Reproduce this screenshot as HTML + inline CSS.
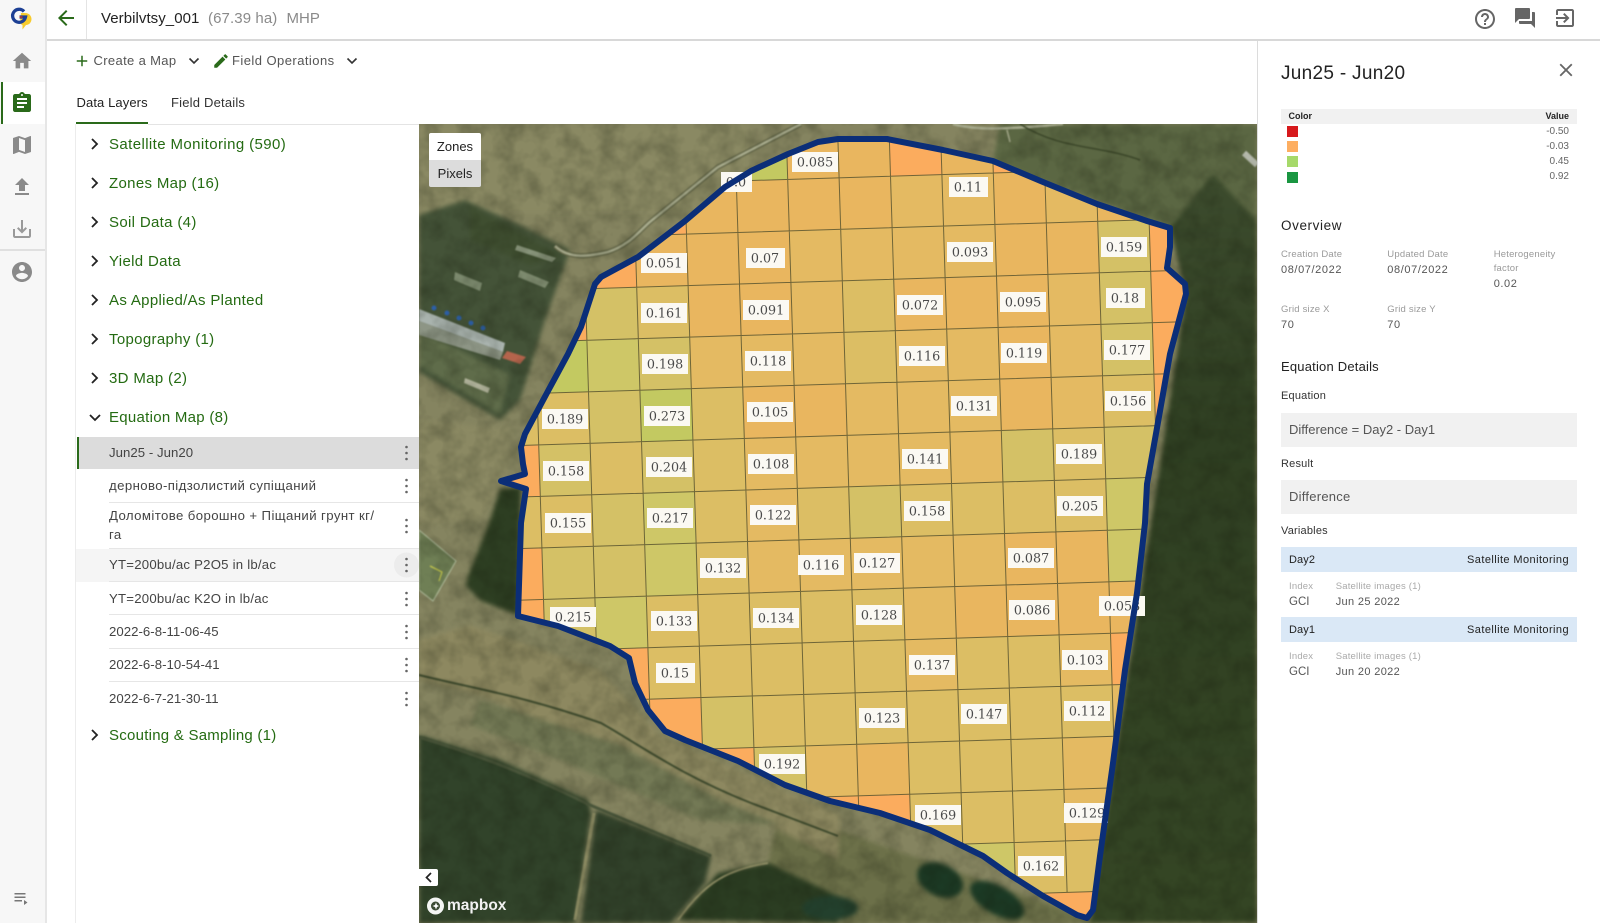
<!DOCTYPE html>
<html><head><meta charset="utf-8"><title>Verbilvtsy_001</title>
<style>
html,body{margin:0;padding:0;background:#fff;width:1600px;height:923px;overflow:hidden}
body{position:relative;font-family:"Liberation Sans","Noto Sans CJK SC",sans-serif}
.t{position:absolute;white-space:nowrap;line-height:20px;color:#444}
.b{position:absolute}
.g{font-size:15px;letter-spacing:.33px;color:#246b12;left:109px}
.s{font-size:13.2px;color:#444;left:109px;letter-spacing:.04px}
.c{letter-spacing:.4px}
.y{letter-spacing:.22px}
.sep{position:absolute;left:109px;width:310px;height:1px;background:#e6e6e6}
.lab{font-size:9.5px;color:#9a9a9a;letter-spacing:.2px}
.val{font-size:11px;color:#555;letter-spacing:.6px}
.h{font-size:13px;color:#222;letter-spacing:.2px}
.l{font-size:11px;color:#333;letter-spacing:.2px}
svg{position:absolute;display:block}
</style></head><body>

<!-- left nav -->
<div class="b" style="left:0;top:0;width:45px;height:923px;background:#f7f7f7;border-right:2px solid #e6e6e6"></div>
<div class="b" style="left:1px;top:82px;width:44px;height:42px;background:#fff"></div>
<div class="b" style="left:1px;top:82px;width:2px;height:42px;background:#2a6a1a"></div>
<div class="b" style="left:0;top:249px;width:45px;height:2px;background:#e0e0e0"></div>

<svg style="left:0;top:0" width="40" height="36" viewBox="0 0 40 36">
<path d="M21 13h4c4 0 6.500 2.800 6.500 6 0 3.500-2.500 6-5.500 6l-3.500 4.500V25c-1.500-.5-2.500-1.500-2.500-3z" fill="#f7cb2d"/>
<path d="M24 11.500A6.500 6.500 0 1 0 25.500 17H19.500" fill="none" stroke="#1c3f94" stroke-width="3.300"/>
<path d="M19.500 17h3" stroke="#c9372c" stroke-width="1.500"/>
</svg>
<svg style="left:11px;top:50px" width="22" height="22" viewBox="0 0 24 24" fill="#8a8a8a"><path d="M10 20v-6h4v6h5v-8h3L12 3 2 12h3v8z"/></svg>
<svg style="left:10px;top:91px" width="24" height="24" viewBox="0 0 24 24" fill="#2a6a1a"><path d="M19 3h-4.180C14.400 1.840 13.300 1 12 1c-1.300 0-2.400.84-2.820 2H5c-1.100 0-2 .9-2 2v14c0 1.100.9 2 2 2h14c1.100 0 2-.9 2-2V5c0-1.100-.9-2-2-2zm-7 0c.55 0 1 .45 1 1s-.45 1-1 1-1-.45-1-1 .45-1 1-1zm2 14H7v-2h7v2zm3-4H7v-2h10v2zm0-4H7V7h10v2z"/></svg>
<svg style="left:10px;top:133px" width="24" height="24" viewBox="0 0 24 24" fill="#8a8a8a"><path d="M20.500 3l-.16.03L15 5.100 9 3 3.360 4.900c-.21.07-.36.25-.36.48V20.500c0 .28.22.5.5.5l.16-.03L9 18.900l6 2.100 5.640-1.900c.21-.07.36-.25.36-.48V3.500c0-.28-.22-.5-.5-.5zM15 19l-6-2.110V5l6 2.110V19z"/></svg>
<svg style="left:10px;top:175px" width="24" height="24" viewBox="0 0 24 24" fill="#8a8a8a"><path d="M9 16h6v-6h4l-7-7-7 7h4zm-4 2h14v2H5z"/></svg>
<svg style="left:10px;top:217px" width="24" height="24" viewBox="0 0 24 24" fill="#9a9a9a"><path d="M19 12v7H5v-7H3v7c0 1.100.9 2 2 2h14c1.100 0 2-.9 2-2v-7h-2zm-6 .67l2.590-2.580L17 11.500l-5 5-5-5 1.410-1.410L11 12.670V3h2z"/></svg>
<svg style="left:10px;top:260px" width="24" height="24" viewBox="0 0 24 24" fill="#8a8a8a"><path d="M12 2C6.480 2 2 6.480 2 12s4.480 10 10 10 10-4.480 10-10S17.520 2 12 2zm0 3c1.660 0 3 1.340 3 3s-1.340 3-3 3-3-1.340-3-3 1.340-3 3-3zm0 14.200c-2.500 0-4.710-1.280-6-3.220.03-1.990 4-3.080 6-3.080 1.990 0 5.970 1.090 6 3.080-1.290 1.940-3.500 3.220-6 3.220z"/></svg>
<svg style="left:13px;top:892px" width="16" height="14" viewBox="0 0 16 14" fill="#777"><path d="M1.500 1h11v1.500h-11zM1.500 4.500h11V6h-11zM1.500 8h7.500v1.500h-7.500zM11 8v5l3.500-2.500z"/></svg>

<!-- top bar -->
<div class="b" style="left:47px;top:39px;width:1553px;height:2px;background:#d8d8d8"></div>
<div class="b" style="left:86px;top:0;width:1px;height:39px;background:#e4e4e4"></div>
<svg style="left:54px;top:6px" width="24" height="24" viewBox="0 0 24 24" fill="#2a6a1a"><path d="M20 11H7.830l5.590-5.590L12 4l-8 8 8 8 1.410-1.410L7.830 13H20v-2z"/></svg>
<div class="t" style="left:101px;top:9px;font-size:15px;letter-spacing:.06px;color:#222">Verbilvtsy_001</div>
<div class="t" style="left:208px;top:9px;font-size:15px;letter-spacing:.1px;color:#8a8a8a">(67.39 ha)</div>
<div class="t" style="left:286.500px;top:9px;font-size:15px;color:#8a8a8a">MHP</div>
<svg style="left:1473px;top:7px" width="24" height="24" viewBox="0 0 24 24" fill="#666"><path d="M11 18h2v-2h-2v2zm1-16C6.480 2 2 6.480 2 12s4.480 10 10 10 10-4.480 10-10S17.520 2 12 2zm0 18c-4.410 0-8-3.590-8-8s3.590-8 8-8 8 3.590 8 8-3.590 8-8 8zm0-14c-2.210 0-4 1.790-4 4h2c0-1.100.9-2 2-2s2 .9 2 2c0 2-3 1.750-3 5h2c0-2.250 3-2.500 3-5 0-2.210-1.790-4-4-4z"/></svg>
<svg style="left:1513px;top:6px" width="24" height="24" viewBox="0 0 24 24" fill="#666"><path d="M21 6h-2v9H6v2c0 .55.45 1 1 1h11l4 4V7c0-.55-.45-1-1-1zm-4 6V3c0-.55-.45-1-1-1H3c-.55 0-1 .45-1 1v14l4-4h10c.55 0 1-.45 1-1z"/></svg>
<svg style="left:1553px;top:6px" width="24" height="24" viewBox="0 0 24 24" fill="#666"><path d="M10.090 15.590L11.500 17l5-5-5-5-1.410 1.410L12.670 11H3v2h9.670l-2.580 2.590zM19 3H5c-1.110 0-2 .89-2 2v4h2V5h14v14H5v-4H3v4c0 1.100.89 2 2 2h14c1.100 0 2-.9 2-2V5c0-1.100-.9-2-2-2z"/></svg>

<!-- toolbar -->
<svg style="left:73px;top:52px" width="18" height="18" viewBox="0 0 24 24" fill="#2a6a1a"><path d="M19 13h-6v6h-2v-6H5v-2h6V5h2v6h6v2z"/></svg>
<div class="t" style="left:93.500px;top:51px;font-size:13px;letter-spacing:.35px;color:#555">Create a Map</div>
<svg style="left:188px;top:57px" width="12" height="8" viewBox="0 0 12 8"><path d="M1.500 1.500L6 6l4.500-4.500" fill="none" stroke="#333" stroke-width="1.600"/></svg>
<svg style="left:212px;top:52px" width="18" height="18" viewBox="0 0 24 24" fill="#2a6a1a"><path d="M3 17.250V21h3.750L17.810 9.940l-3.750-3.750L3 17.250zM20.710 7.040c.39-.39.39-1.020 0-1.410l-2.340-2.340c-.39-.39-1.020-.39-1.410 0l-1.830 1.830 3.750 3.750 1.830-1.830z"/></svg>
<div class="t" style="left:232px;top:51px;font-size:13px;letter-spacing:.45px;color:#555">Field Operations</div>
<svg style="left:346px;top:57px" width="12" height="8" viewBox="0 0 12 8"><path d="M1.500 1.500L6 6l4.500-4.500" fill="none" stroke="#333" stroke-width="1.600"/></svg>

<!-- tabs -->
<div class="t" style="left:76.500px;top:92.500px;font-size:13px;letter-spacing:.1px;color:#222">Data Layers</div>
<div class="t" style="left:171px;top:92.500px;font-size:13px;letter-spacing:.2px;color:#333">Field Details</div>
<div class="b" style="left:76px;top:122px;width:72px;height:2px;background:#2a6a1a"></div>
<div class="b" style="left:148px;top:124px;width:271px;height:1px;background:#e4e4e4"></div>
<div class="b" style="left:75px;top:124px;width:1px;height:799px;background:#ececec"></div>

<!-- list -->
<div class="t g" style="top:135px;letter-spacing:.4px">Satellite Monitoring (590)</div>
<div class="t g" style="top:174px">Zones Map (16)</div>
<div class="t g" style="top:213px">Soil Data (4)</div>
<div class="t g" style="top:252px">Yield Data</div>
<div class="t g" style="top:291px">As Applied/As Planted</div>
<div class="t g" style="top:330px">Topography (1)</div>
<div class="t g" style="top:369px">3D Map (2)</div>
<div class="t g" style="top:407.500px;letter-spacing:.28px">Equation Map (8)</div>
<div class="t g" style="top:725.500px;letter-spacing:.25px">Scouting &amp; Sampling (1)</div>
<svg style="left:88px;top:134px" width="14" height="610" viewBox="0 0 14 610" fill="none" stroke="#222" stroke-width="1.800">
<path d="M4 5l5 5-5 5M4 44l5 5-5 5M4 83l5 5-5 5M4 122l5 5-5 5M4 161l5 5-5 5M4 200l5 5-5 5M4 239l5 5-5 5M2 281l5 5 5-5M4 596l5 5-5 5"/></svg>

<div class="b" style="left:77px;top:437px;width:342px;height:32px;background:#dcdcdc"></div>
<div class="b" style="left:77px;top:437px;width:2px;height:32px;background:#2a6a1a"></div>
<div class="b" style="left:76px;top:549px;width:343px;height:33px;background:#f5f5f5"></div>
<div class="t s" style="top:442.700px">Jun25 - Jun20</div>
<div class="t s c" style="top:476px">дерново-підзолистий супіщаний</div>
<div class="t s c" style="top:506px">Доломітове борошно + Піщаний грунт кг/</div>
<div class="t s c" style="top:525px">га</div>
<div class="t s y" style="top:555px">YT=200bu/ac P2O5 in lb/ac</div>
<div class="t s y" style="top:589px">YT=200bu/ac K2O in lb/ac</div>
<div class="t s" style="top:622px">2022-6-8-11-06-45</div>
<div class="t s" style="top:655px">2022-6-8-10-54-41</div>
<div class="t s" style="top:688.500px">2022-6-7-21-30-11</div>
<div class="sep" style="top:502px"></div><div class="sep" style="top:548px"></div><div class="sep" style="top:581px"></div><div class="sep" style="top:614px"></div><div class="sep" style="top:648px"></div><div class="sep" style="top:681px"></div>
<svg style="left:394px;top:440px" width="25" height="270" viewBox="0 0 25 270">
<circle cx="12.500" cy="125" r="12.500" fill="#ececec"/>
<g fill="#666"><circle cx="12.500" cy="7" r="1.300"/><circle cx="12.500" cy="13" r="1.300"/><circle cx="12.500" cy="19" r="1.300"/>
<circle cx="12.500" cy="40" r="1.300"/><circle cx="12.500" cy="46" r="1.300"/><circle cx="12.500" cy="52" r="1.300"/>
<circle cx="12.500" cy="80" r="1.300"/><circle cx="12.500" cy="86" r="1.300"/><circle cx="12.500" cy="92" r="1.300"/>
<circle cx="12.500" cy="119" r="1.300"/><circle cx="12.500" cy="125" r="1.300"/><circle cx="12.500" cy="131" r="1.300"/>
<circle cx="12.500" cy="153" r="1.300"/><circle cx="12.500" cy="159" r="1.300"/><circle cx="12.500" cy="165" r="1.300"/>
<circle cx="12.500" cy="186" r="1.300"/><circle cx="12.500" cy="192" r="1.300"/><circle cx="12.500" cy="198" r="1.300"/>
<circle cx="12.500" cy="219" r="1.300"/><circle cx="12.500" cy="225" r="1.300"/><circle cx="12.500" cy="231" r="1.300"/>
<circle cx="12.500" cy="253" r="1.300"/><circle cx="12.500" cy="259" r="1.300"/><circle cx="12.500" cy="265" r="1.300"/></g></svg>

<!-- map -->
<svg style="left:419px;top:124px" width="838" height="799" viewBox="419 124 838 799">
<defs>
<filter id="bl" x="-5%" y="-5%" width="110%" height="110%" color-interpolation-filters="sRGB"><feGaussianBlur stdDeviation="2.500"/></filter>
<filter id="bl2" x="-5%" y="-5%" width="110%" height="110%" color-interpolation-filters="sRGB"><feGaussianBlur stdDeviation=".8"/></filter>
<filter id="nz" x="0" y="0" width="100%" height="100%" color-interpolation-filters="sRGB"><feTurbulence type="fractalNoise" baseFrequency=".05" numOctaves="3" seed="5"/><feColorMatrix values="0 0 0 0 .08  0 0 0 0 .1  0 0 0 0 .04  1.400 0 0 0 -.5"/></filter>
<linearGradient id="rf" x1="0" y1="0" x2="0" y2="1"><stop offset="0" stop-color="#3c4b2d"/><stop offset=".35" stop-color="#2f3f22"/><stop offset="1" stop-color="#344524"/></linearGradient>
<clipPath id="fc"><polygon points="501,481 525,474 523,464 521,447 525,434 548,391 568,354 581,327 595,284 601,277 638,257 685,221 725,187 751,171 788,154 818,142 838,139 887,139 943,150 993,161 1043,182 1097,204 1147,221 1170,228 1170,247 1167,268 1185,284 1186,294 1170,354 1160,411 1147,484 1145,523 1137,593 1125,670 1113,763 1100,856 1093,910 1087,918 1077,915 1043,896 1007,873 983,856 930,830 880,813 830,801 785,785 738,761 685,740 665,731 648,710 635,683 629,658 610,646 558,626 518,616 521,523 526,489"/></clipPath>
</defs>
<rect x="419" y="124" width="838" height="799" fill="#858460"/>
<g filter="url(#bl)">
<rect x="419" y="124" width="330" height="90" fill="#8a8963"/>
<polygon points="419,215 465,200 520,225 570,250 545,320 520,400 500,420 419,372" fill="#445338"/>
<polygon points="470,205 560,255 530,265 470,240" fill="#3f4e30"/>
<polygon points="419,330 510,375 500,415 419,365" fill="#5f6c4a"/>
<polygon points="419,420 515,430 505,480 480,520 419,525" fill="#8b8963"/>
<polygon points="1000,124 1257,124 1257,221 1213,174 1190,222 1170,228 1043,182 993,161" fill="#5b6743"/>
<polygon points="1170,228 1213,174 1257,221 1257,923 1090,923 1100,856 1186,294" fill="url(#rf)"/>
<polygon points="489,523 500,489 521,487 518,615 481,601 466,586 468,576" fill="#2d3e22"/>
<polygon points="419,735 500,760 588,800 591,813 575,923 419,923" fill="#31432a"/>
<polygon points="596,810 711,856 705,883 671,923 581,923" fill="#31412a"/>
<polygon points="678,920 718,873 768,863 838,896 838,923" fill="#2b3d22"/>
<polygon points="780,810 1090,918 1090,923 840,923 838,896 768,863" fill="#6c7049"/>
<polygon points="470,625 600,670 660,735 840,815 838,860 640,760 480,695 419,680 419,640" fill="#8d8860"/>
<polygon points="480,700 620,745 720,800 780,825 700,820 560,760 470,725" fill="#737955"/>
<ellipse cx="940" cy="880" rx="24" ry="16" fill="#1c3a25" transform="rotate(25 940 880)"/>
<ellipse cx="997" cy="900" rx="30" ry="14" fill="#1c3a25" transform="rotate(30 997 900)"/>
<ellipse cx="830" cy="908" rx="28" ry="12" fill="#23402d"/>
</g>
<g filter="url(#bl2)">
<polygon points="419,530 456,561 433,601 419,590" fill="#6f7f55" stroke="#b5c0a0" stroke-width="1"/>
<path d="M430 566l12 6-3 9" fill="none" stroke="#d9d94a" stroke-width="1"/>
<polygon points="419,309 505,343 503,352 419,321" fill="#a9b3ae"/>
<polygon points="419,321 503,352 500,360 419,335" fill="#8d9585"/>
<polygon points="507,351 526,357 520,364 502,358" fill="#b4644c"/>
<polygon points="455,272 482,283 480,291 454,280" fill="#808e72"/>
<polygon points="517,245 556,258 552,262 515,250" fill="#88947a"/>
<polygon points="520,270 549,282 545,288 518,277" fill="#7f8c70"/>
<polygon points="465,378 490,388 488,393 464,383" fill="#b4b69e"/>
<circle cx="434" cy="308" r="2.500" fill="#2c5fa8"/><circle cx="447" cy="313" r="2.500" fill="#2c5fa8"/><circle cx="459" cy="318" r="2.500" fill="#2c5fa8"/><circle cx="471" cy="323" r="2.500" fill="#2c5fa8"/><circle cx="483" cy="328" r="2.500" fill="#2c5fa8"/>
<path d="M555 246C570 260 590 256 608 252 630 245 640 230 651 221L718 167 801 124" fill="none" stroke="#5f6244" stroke-width="5"/>
<path d="M555 246C570 260 590 256 608 252 630 245 640 230 651 221L718 167 801 124" fill="none" stroke="#aaad8f" stroke-width="2.500"/>
<path d="M953 124C975 130 1000 130 1063 124" fill="none" stroke="#a9ad90" stroke-width="2.500"/>
<path d="M1007 130l3 12" stroke="#a9ad90" stroke-width="1.500"/>
<path d="M1257 165l-13-12" stroke="#b9bdb0" stroke-width="6"/>
<path d="M419 675C480 690 520 695 601 723 640 745 680 775 751 803L838 836" fill="none" stroke="#3e4a2d" stroke-width="2"/>
<path d="M419 737C480 755 540 780 590 805L711 856" fill="none" stroke="#49553a" stroke-width="3"/>
<path d="M594 813L575 920" stroke="#8b8a62" stroke-width="3"/>
<path d="M678 920C700 890 720 870 768 863" fill="none" stroke="#8b8a62" stroke-width="2"/>
<path d="M1020 124C1060 150 1100 145 1140 160" fill="none" stroke="#3a4528" stroke-width="1.500"/>
</g>
<rect x="419" y="124" width="838" height="799" filter="url(#nz)" opacity=".35"/>

<g clip-path="url(#fc)">
<rect x="419" y="124" width="838" height="799" fill="#e4ba62"/>
<polygon points="1030,893 1105,887 1105,923 1060,923" fill="#fbac5e"/>
<g transform="matrix(51.4,-1.6,1.6,51.5,1097.7,221.3)">
<path fill="#fbac5e" d="M-9-1h1v1h-1zM-10 0h1v1h-1zM-11 1h1v1h-1zM-12 4h1v1h-1zM-12 6h1v1h-1zM-12 7h1v1h-1zM-10 8h1v1h-1zM-9 9h1v1h-1zM-8 10h1v1h-1zM-4-2h1v1h-1zM-2-2h1v1h-1zM1-1h1v1h-1zM1 0h1v1h-1zM1 1h1v1h-1zM1 2h1v1h-1zM1 3h1v1h-1zM-5 11h1v1h-1zM-6 11h1v1h-1zM0 8h1v1h-1z"/>
<path fill="#e9b65f" d="M-7-1h1v1h-1zM-8-1h1v1h-1zM-6-2h1v1h-1zM-5-2h1v1h-1zM-3-2h1v1h-1zM0-1h1v1h-1zM-9 0h1v1h-1zM-7 0h1v1h-1zM-8 0h1v1h-1zM-7 1h1v1h-1zM-4 1h1v1h-1zM-3 1h1v1h-1zM-2 1h1v1h-1zM-2 0h1v1h-1zM-1 0h1v1h-1zM-6-1h1v1h-1zM-5-1h1v1h-1zM-2-1h1v1h-1zM-6 3h1v1h-1zM-2 3h1v1h-1zM-7 3h1v1h-1zM-2 6h1v1h-1zM-1 6h1v1h-1zM-3 7h1v1h-1zM-2 7h1v1h-1zM-1 7h1v1h-1zM0 7h1v1h-1zM-5 10h1v1h-1zM-8 1h1v1h-1zM-2 2h1v1h-1z"/>
<path fill="#dcbe64" d="M-9 1h1v1h-1zM-5 1h1v1h-1zM-5 2h1v1h-1zM-11 3h1v1h-1zM-12 3h1v1h-1zM-10 4h1v1h-1zM-8 4h1v1h-1zM-12 5h2v1h-2zM-8 5h1v1h-1zM-8 6h1v1h-1zM-9 7h1v1h-1zM-8 7h1v1h-1zM-7 7h1v1h-1zM-6 7h1v1h-1zM-9 8h1v1h-1zM-8 8h1v1h-1zM-7 8h1v1h-1zM-6 8h1v1h-1zM-6 9h1v1h-1zM-4 5h1v1h-1zM-3 5h1v1h-1zM-2 5h1v1h-1zM-1 4h1v1h-1zM-1 5h1v1h-1zM-5 8h1v1h-1zM-3 8h1v1h-1zM-2 8h1v1h-1zM-5 9h1v1h-1zM-4 9h1v1h-1zM-3 9h1v1h-1zM-2 9h1v1h-1zM-1 9h1v1h-1zM-4 10h1v1h-1zM-3 10h1v1h-1zM-2 10h1v1h-1zM-4 11h1v1h-1zM-3 11h1v1h-1zM-2 11h1v1h-1zM-2 12h1v1h-1zM-1 12h1v1h-1zM-6 5h1v1h-1zM-5 7h1v1h-1zM0 3h1v1h-1zM-8 3h1v1h-1zM-7 9h1v1h-1z"/>
<path fill="#d4c166" d="M-10 1h1v1h-1zM-9 2h1v1h-1zM-10 3h1v1h-1zM-11 4h1v1h-1zM-9 4h1v1h-1zM-10 5h1v1h-1zM-11 6h1v1h-1zM-10 6h1v1h-1zM-11 7h1v1h-1zM-8 9h1v1h-1zM-7 10h1v1h-1zM0 0h1v1h-1zM0 1h1v1h-1zM0 2h1v1h-1zM-2 4h1v1h-1zM0 4h1v1h-1zM-5 5h1v1h-1z"/>
<path fill="#cec767" d="M-10 2h1v1h-1zM-9 5h1v1h-1zM-9 6h1v1h-1zM-10 7h1v1h-1zM0 5h1v1h-1zM0 6h1v1h-1zM0 10h1v1h-1zM-3 12h1v1h-1z"/>
<path fill="#c3c961" d="M-7-2h1v1h-1zM-11 2h1v1h-1zM-9 3h1v1h-1z"/>
<path fill="none" stroke="#5a5630" stroke-opacity=".85" stroke-width="1" vector-effect="non-scaling-stroke" d="M-12-3V13M-11-3V13M-10-3V13M-9-3V13M-8-3V13M-7-3V13M-6-3V13M-5-3V13M-4-3V13M-3-3V13M-2-3V13M-1-3V13M0-3V13M1-3V13M-13-2H3M-13-1H3M-13 0H3M-13 1H3M-13 2H3M-13 3H3M-13 4H3M-13 5H3M-13 6H3M-13 7H3M-13 8H3M-13 9H3M-13 10H3M-13 11H3M-13 12H3M-13 13H3"/>
</g>
</g>

<g fill="#fbf9f3">
<rect x="792" y="152" width="46" height="20"/><rect x="721" y="172" width="31" height="20"/><rect x="641" y="253" width="46" height="20"/><rect x="746" y="248" width="39" height="20"/><rect x="641" y="303" width="46" height="20"/><rect x="743" y="300" width="46" height="20"/><rect x="642" y="354" width="46" height="20"/><rect x="745" y="351" width="46" height="20"/><rect x="542" y="409" width="46" height="20"/><rect x="644" y="406" width="46" height="20"/><rect x="747" y="402" width="46" height="20"/><rect x="543" y="461" width="46" height="20"/><rect x="646" y="457" width="46" height="20"/><rect x="748" y="454" width="46" height="20"/><rect x="545" y="513" width="46" height="20"/><rect x="647" y="508" width="46" height="20"/><rect x="750" y="505" width="46" height="20"/>
<rect x="949" y="177" width="39" height="20"/><rect x="947" y="242" width="46" height="20"/><rect x="1101" y="237" width="46" height="20"/><rect x="897" y="295" width="46" height="20"/><rect x="1000" y="292" width="46" height="20"/><rect x="1106" y="288" width="39" height="20"/><rect x="899" y="346" width="46" height="20"/><rect x="1001" y="343" width="46" height="20"/><rect x="1104" y="340" width="46" height="20"/><rect x="951" y="396" width="46" height="20"/><rect x="1105" y="391" width="46" height="20"/><rect x="902" y="449" width="46" height="20"/><rect x="1056" y="444" width="46" height="20"/><rect x="904" y="501" width="46" height="20"/><rect x="1057" y="496" width="46" height="20"/>
<rect x="700" y="558" width="46" height="20"/><rect x="798" y="555" width="46" height="20"/><rect x="550" y="607" width="46" height="20"/><rect x="651" y="611" width="46" height="20"/><rect x="753" y="608" width="46" height="20"/><rect x="656" y="663" width="39" height="20"/><rect x="759" y="754" width="46" height="20"/>
<rect x="854" y="553" width="46" height="20"/><rect x="1008" y="548" width="46" height="20"/><rect x="856" y="605" width="46" height="20"/><rect x="1009" y="600" width="46" height="20"/><rect x="1099" y="596" width="46" height="20"/><rect x="909" y="655" width="46" height="20"/><rect x="1062" y="650" width="46" height="20"/><rect x="859" y="708" width="46" height="20"/><rect x="961" y="704" width="46" height="20"/><rect x="1064" y="701" width="46" height="20"/><rect x="915" y="805" width="46" height="20"/><rect x="1064" y="803" width="44" height="20"/><rect x="1018" y="856" width="46" height="20"/>
</g>
<g font-family="'DejaVu Serif',serif" font-size="12.700" fill="#4a4a4a" text-anchor="middle">
<text x="815" y="166.500">0.085</text><text x="736" y="186.500">0.0</text><text x="664" y="267.500">0.051</text><text x="765" y="262.500">0.07</text><text x="664" y="317.500">0.161</text><text x="766" y="314.500">0.091</text><text x="665" y="368.500">0.198</text><text x="768" y="365.500">0.118</text><text x="565" y="423.500">0.189</text><text x="667" y="420.500">0.273</text><text x="770" y="416.500">0.105</text><text x="566" y="475.500">0.158</text><text x="669" y="471.500">0.204</text><text x="771" y="468.500">0.108</text><text x="568" y="527.500">0.155</text><text x="670" y="522.500">0.217</text><text x="773" y="519.500">0.122</text>
<text x="968" y="191.500">0.11</text><text x="970" y="256.500">0.093</text><text x="1124" y="251.500">0.159</text><text x="920" y="309.500">0.072</text><text x="1023" y="306.500">0.095</text><text x="1125" y="302.500">0.18</text><text x="922" y="360.500">0.116</text><text x="1024" y="357.500">0.119</text><text x="1127" y="354.500">0.177</text><text x="974" y="410.500">0.131</text><text x="1128" y="405.500">0.156</text><text x="925" y="463.500">0.141</text><text x="1079" y="458.500">0.189</text><text x="927" y="515.500">0.158</text><text x="1080" y="510.500">0.205</text>
<text x="723" y="572.500">0.132</text><text x="821" y="569.500">0.116</text><text x="573" y="621.500">0.215</text><text x="674" y="625.500">0.133</text><text x="776" y="622.500">0.134</text><text x="675" y="677.500">0.15</text><text x="782" y="768.500">0.192</text>
<text x="877" y="567.500">0.127</text><text x="1031" y="562.500">0.087</text><text x="879" y="619.500">0.128</text><text x="1032" y="614.500">0.086</text><text x="1122" y="610.500">0.053</text><text x="932" y="669.500">0.137</text><text x="1085" y="664.500">0.103</text><text x="882" y="722.500">0.123</text><text x="984" y="718.500">0.147</text><text x="1087" y="715.500">0.112</text><text x="938" y="819.500">0.169</text><text x="1087" y="817.500">0.129</text><text x="1041" y="870.500">0.162</text>
</g>
<polygon fill="none" stroke="#0b2e78" stroke-width="6" stroke-linejoin="round" points="501,481 525,474 523,464 521,447 525,434 548,391 568,354 581,327 595,284 601,277 638,257 685,221 725,187 751,171 788,154 818,142 838,139 887,139 943,150 993,161 1043,182 1097,204 1147,221 1170,228 1170,247 1167,268 1185,284 1186,294 1170,354 1160,411 1147,484 1145,523 1137,593 1125,670 1113,763 1100,856 1093,910 1087,918 1077,915 1043,896 1007,873 983,856 930,830 880,813 830,801 785,785 738,761 685,740 665,731 648,710 635,683 629,658 610,646 558,626 518,616 521,523 526,489"/>
<!-- mapbox -->
<circle cx="435.500" cy="906" r="8.500" fill="#fff" opacity=".95"/>
<circle cx="435.500" cy="906" r="4.500" fill="#3b4a33"/>
<path d="M432.500 906l2.500-1 1-2.500 1 2.500 2 1-2 1-1 2.500-1-2.500z" fill="#fff"/>
</svg>
<div class="t" style="left:447px;top:896px;font-size:15.500px;font-weight:bold;color:#f2f2f2">mapbox</div>

<!-- zones control -->
<div class="b" style="left:429px;top:133px;width:52px;height:27px;background:#fff;border-radius:2px 2px 0 0"></div>
<div class="b" style="left:429px;top:160px;width:52px;height:27px;background:#dcdcdc;border-radius:0 0 2px 2px"></div>
<div class="t" style="left:429px;top:136.500px;width:52px;text-align:center;font-size:13px;color:#222">Zones</div>
<div class="t" style="left:429px;top:163.500px;width:52px;text-align:center;font-size:13px;color:#222">Pixels</div>
<div class="b" style="left:419px;top:869px;width:19px;height:17px;background:#fff;border-radius:0 2px 2px 0"></div>
<svg style="left:424px;top:872px" width="10" height="11" viewBox="0 0 10 11"><path d="M7 1L2.500 5.500 7 10" fill="none" stroke="#222" stroke-width="1.700"/></svg>

<!-- right panel -->
<div class="b" style="left:1257px;top:41px;width:1px;height:882px;background:#dcdcdc"></div>
<div class="t" style="left:1281px;top:63.500px;font-size:19px;letter-spacing:.3px;color:#222">Jun25 - Jun20</div>
<svg style="left:1555px;top:59px" width="22" height="22" viewBox="0 0 24 24" fill="#666"><path d="M19 6.410L17.590 5 12 10.590 6.410 5 5 6.410 10.590 12 5 17.590 6.410 19 12 13.410 17.590 19 19 17.590 13.410 12z"/></svg>

<div class="b" style="left:1281px;top:109px;width:296px;height:15px;background:#f1f1f1"></div>
<div class="t" style="left:1288.500px;top:106px;font-size:9px;font-weight:bold;color:#222">Color</div>
<div class="t" style="right:31px;top:106px;font-size:9px;font-weight:bold;color:#222">Value</div>
<div class="b" style="left:1287px;top:126px;width:11px;height:11px;background:#d7191c"></div>
<div class="b" style="left:1287px;top:141px;width:11px;height:11px;background:#fdae61"></div>
<div class="b" style="left:1287px;top:156px;width:11px;height:11px;background:#a6d96a"></div>
<div class="b" style="left:1287px;top:172px;width:11px;height:11px;background:#1a9641"></div>
<div class="t" style="right:31px;top:121.500px;font-size:10px;color:#666">-0.50</div>
<div class="t" style="right:31px;top:137px;font-size:10px;color:#666">-0.03</div>
<div class="t" style="right:31px;top:152px;font-size:10px;color:#666">0.45</div>
<div class="t" style="right:31px;top:167px;font-size:10px;color:#666">0.92</div>

<div class="t" style="left:1281px;top:215.500px;font-size:13.500px;letter-spacing:.6px;color:#222">Overview</div>
<div class="t lab" style="left:1281px;top:244.500px">Creation Date</div>
<div class="t val" style="left:1281px;top:259.500px">08/07/2022</div>
<div class="t lab" style="left:1387.300px;top:244.500px">Updated Date</div>
<div class="t val" style="left:1387.300px;top:259.500px">08/07/2022</div>
<div class="t lab" style="left:1493.700px;top:244.500px">Heterogeneity</div>
<div class="t lab" style="left:1493.700px;top:258.500px">factor</div>
<div class="t val" style="left:1493.700px;top:274px">0.02</div>
<div class="t lab" style="left:1281px;top:299.500px">Grid size X</div>
<div class="t val" style="left:1281px;top:314.700px">70</div>
<div class="t lab" style="left:1387.300px;top:299.500px">Grid size Y</div>
<div class="t val" style="left:1387.300px;top:314.700px">70</div>

<div class="t h" style="left:1281px;top:356.700px">Equation Details</div>
<div class="t l" style="left:1281px;top:385.500px">Equation</div>
<div class="b" style="left:1281px;top:413px;width:296px;height:34px;background:#f1f1f1"></div>
<div class="t" style="left:1289px;top:419.500px;font-size:13px;color:#555">Difference = Day2 - Day1</div>
<div class="t l" style="left:1281px;top:453.500px">Result</div>
<div class="b" style="left:1281px;top:480px;width:296px;height:34px;background:#f1f1f1"></div>
<div class="t" style="left:1289px;top:486.500px;font-size:13px;letter-spacing:.25px;color:#555">Difference</div>
<div class="t l" style="left:1281px;top:520.500px">Variables</div>

<div class="b" style="left:1281px;top:547px;width:296px;height:25px;background:#dae8f6"></div>
<div class="t" style="left:1289px;top:549.500px;font-size:11px;color:#222;letter-spacing:.1px">Day2</div>
<div class="t" style="right:31px;top:549.500px;font-size:11px;color:#222;letter-spacing:.42px">Satellite Monitoring</div>
<div class="t lab" style="left:1289px;top:576.500px;color:#aaa">Index</div>
<div class="t lab" style="left:1335.700px;top:576.500px;color:#aaa">Satellite images (1)</div>
<div class="t" style="left:1289px;top:591.500px;font-size:11.500px;color:#555">GCI</div>
<div class="t" style="left:1335.700px;top:591.500px;font-size:11px;color:#555;letter-spacing:.35px">Jun 25 2022</div>

<div class="b" style="left:1281px;top:617px;width:296px;height:25px;background:#dae8f6"></div>
<div class="t" style="left:1289px;top:619.500px;font-size:11px;color:#222;letter-spacing:.1px">Day1</div>
<div class="t" style="right:31px;top:619.500px;font-size:11px;color:#222;letter-spacing:.42px">Satellite Monitoring</div>
<div class="t lab" style="left:1289px;top:646.500px;color:#aaa">Index</div>
<div class="t lab" style="left:1335.700px;top:646.500px;color:#aaa">Satellite images (1)</div>
<div class="t" style="left:1289px;top:661.500px;font-size:11.500px;color:#555">GCI</div>
<div class="t" style="left:1335.700px;top:661.500px;font-size:11px;color:#555;letter-spacing:.35px">Jun 20 2022</div>
</body></html>
